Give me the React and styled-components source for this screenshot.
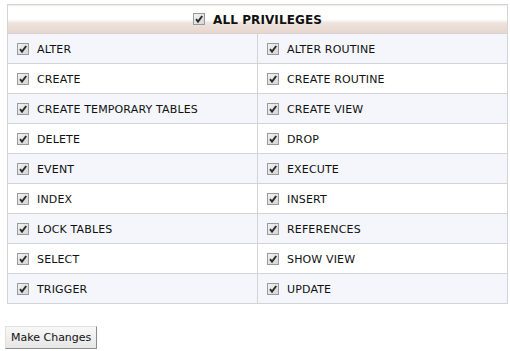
import React from "react";
import styled, { createGlobalStyle } from "styled-components";

const GlobalStyle = createGlobalStyle`
  body {
    margin: 0;
    background: #fff;
    font-family: "DejaVu Sans", Verdana, sans-serif;
    color: #111;
  }
`;

const privileges = [
  ["ALTER", "ALTER ROUTINE"],
  ["CREATE", "CREATE ROUTINE"],
  ["CREATE TEMPORARY TABLES", "CREATE VIEW"],
  ["DELETE", "DROP"],
  ["EVENT", "EXECUTE"],
  ["INDEX", "INSERT"],
  ["LOCK TABLES", "REFERENCES"],
  ["SELECT", "SHOW VIEW"],
  ["TRIGGER", "UPDATE"],
];

function Check() {
  return (
    <Box viewBox="0 0 12 12" width="12" height="12">
      <defs>
        <linearGradient id="cb" x1="0" y1="0" x2="1" y2="1">
          <stop offset="0" stopColor="#f4f4f4" />
          <stop offset="1" stopColor="#d4d4d4" />
        </linearGradient>
      </defs>
      <rect x="0.5" y="0.5" width="11" height="11" fill="url(#cb)" stroke="#9a9a9a" />
      <path d="M3 6.2 L5 8.6 L9.2 3" fill="none" stroke="#2a2a2a" strokeWidth="1.9" />
    </Box>
  );
}

function App() {
  return (
    <>
      <GlobalStyle />
      <Page>
        <Table>
          <thead>
            <tr>
              <Head colSpan={2}>
                <Label>
                  <Check />
                  <strong>ALL PRIVILEGES</strong>
                </Label>
              </Head>
            </tr>
          </thead>
          <tbody>
            {privileges.map((pair, i) => (
              <Row key={pair[0]} $shaded={i % 2 === 0}>
                {pair.map((p) => (
                  <Cell key={p}>
                    <Label>
                      <Check />
                      {p}
                    </Label>
                  </Cell>
                ))}
              </Row>
            ))}
          </tbody>
        </Table>
        <Button>Make Changes</Button>
      </Page>
    </>
  );
}

export default App;

const Page = styled.div`
  padding: 4px 3px 0 7px;
`;

const Table = styled.table`
  width: 501px;
  border-collapse: collapse;
  border: 1px solid #d3d3d3;
  font-size: 11px;
`;

const Head = styled.th`
  height: 29px;
  padding: 4px 0 0;
  box-sizing: border-box;
  text-align: center;
  background: linear-gradient(#ffffff 0%, #ffffff 50%, #eee3dd 62%, #e6d5cc 100%);
  border-bottom: 1px solid #d3d3d3;
  font-size: 12px;
  strong {
    font-weight: bold;
    letter-spacing: 0.1px;
  }
`;

const Row = styled.tr`
  background: ${(p) => (p.$shaded ? "#f4f6fb" : "#fff")};
`;

const Cell = styled.td`
  width: 50%;
  height: 30px;
  box-sizing: border-box;
  padding: 5px 0 0 9px;
  border: 1px solid #d3d3d3;
  vertical-align: middle;
  letter-spacing: 0.15px;
`;

const Label = styled.span`
  display: inline-flex;
  align-items: center;
  gap: 8px;
`;

const Box = styled.svg`
  flex: none;
  position: relative;
  top: -1px;
`;

const Button = styled.button`
  margin: 22px 0 0 -2px;
  height: 23px;
  padding: 0 5px;
  font-family: "DejaVu Sans", Verdana, sans-serif;
  font-size: 11px;
  color: #111;
  background: linear-gradient(#f8f8f8, #e6e6e6);
  border: 1px solid;
  border-color: #e0e0e0 #8c8c8c #8c8c8c #e0e0e0;
  border-radius: 0;
`;
